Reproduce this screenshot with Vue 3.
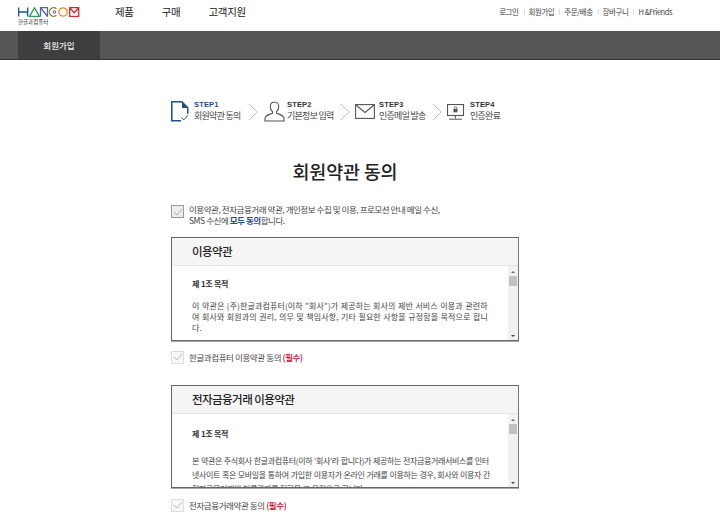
<script setup>
const steps = [
  { id: 'STEP1', label: '회원약관 동의', active: true, icon: 'doc' },
  { id: 'STEP2', label: '기본정보 입력', icon: 'user' },
  { id: 'STEP3', label: '인증메일 발송', icon: 'mail' },
  { id: 'STEP4', label: '인증완료', icon: 'monitor' },
]
const topLinks = ['로그인', '회원가입', '주문/배송', '장바구니', 'H &Friends']
</script>

<template>
  <div class="page">
    <header class="top">
      <div class="logo">
        <svg class="logo-mark" width="62" height="10" viewBox="0 0 62 10" fill="none" stroke-width="1.3">
          <path d="M.7 .5v9M9.700 .5v9M.7 5h9" stroke="#1b4f9c" />
          <path d="M11.500 9.300 16.500 .8 21.500 9.300Z" stroke="#2f9e4f" />
          <path d="M22.500 9.500V.6h7v8.900" stroke="#2a78c4" />
          <path d="M22.500 .6l7 8.900" stroke="#7b3fa0" />
          <path d="M38.500 1.700a4.300 4.300 0 1 0 0 6.600" stroke="#6f8f2a" />
          <circle cx="36.500" cy="5" r="1.300" stroke="#7b3fa0" stroke-width="1" />
          <circle cx="45" cy="5" r="4.200" stroke="#e8891a" />
          <path d="M51.700 9.300V.7h9v8.600ZM51.700 .7l4.500 5 4.500-5" stroke="#d8262c" />
        </svg>
        <span class="logo-sub">한글과컴퓨터</span>
      </div>
      <nav class="main-nav">
        <a>제품</a>
        <a>구매</a>
        <a>고객지원</a>
      </nav>
      <ul class="top-links">
        <li v-for="link in topLinks" :key="link">{{ link }}</li>
      </ul>
    </header>

    <div class="subbar">
      <div class="subtab">회원가입</div>
    </div>

    <main class="content">
      <ol class="steps">
        <template v-for="(s, i) in steps" :key="s.id">
          <li v-if="i > 0" class="chev">
            <svg width="10" height="18" viewBox="0 0 10 18" fill="none" stroke="#bdbdbd"><path d="M1 1l8 8-8 8" /></svg>
          </li>
          <li class="step" :class="[s.icon, { active: s.active }]">
            <svg v-if="s.icon === 'doc'" width="18" height="21" viewBox="0 0 18 21" fill="none" stroke="#1d4f91" stroke-width="1.5">
              <path d="M10 19.800H.8V.8h10l6 6v6" />
              <path d="M11 1v6h6Z" fill="#1d4f91" stroke="none" />
              <path d="M10.500 16.500l2.300 2.300 4-4.500" stroke-width="1" />
            </svg>
            <svg v-else-if="s.icon === 'user'" width="21" height="21" viewBox="0 0 21 21" fill="none" stroke="#555" stroke-width="1.1">
              <path d="M10.500 1c-2.700 0-4.200 2-4.200 4.700 0 2.200 1 4 2.200 5v1.600C6 13.300 1 14 1 17.600V20h19v-2.400c0-3.600-5-4.300-7.500-5.300v-1.600c1.200-1 2.200-2.800 2.200-5C14.700 3 13.200 1 10.500 1Z" />
            </svg>
            <svg v-else-if="s.icon === 'mail'" width="20" height="15" viewBox="0 0 20 15" fill="none" stroke="#555" stroke-width="1.1">
              <rect x=".6" y=".6" width="18.800" height="13.800" />
              <path d="M1 1l9 7.500L19 1" />
            </svg>
            <svg v-else width="19" height="16" viewBox="0 0 19 16" fill="none" stroke="#555">
              <rect x="1.500" y=".5" width="16" height="11" stroke-width="1.100" />
              <rect x="7.500" y="4.800" width="4" height="3.500" fill="#555" stroke="none" />
              <path d="M8.300 4.800V3.800a1.200 1.200 0 0 1 2.400 0v1" stroke-width=".8" />
              <path d="M9.500 11.500v3M3 15.200h13" />
            </svg>
            <div class="step-text">
              <strong>{{ s.id }}</strong>
              <span>{{ s.label }}</span>
            </div>
          </li>
        </template>
      </ol>

      <h1 class="title">회원약관 동의</h1>

      <div class="all-agree">
        <span class="check check-all"><svg width="10" height="8" viewBox="0 0 10 8" fill="none" stroke="#aaa"><path d="M1 4l3 3 5-6" /></svg></span>
        <p>이용약관, 전자금융거래 약관, 개인정보 수집 및 이용, 프로모션 안내 메일 수신,<br />SMS 수신에 <b>모두 동의</b>합니다.</p>
      </div>

      <section class="terms">
        <h2>이용약관</h2>
        <div class="scrollbox">
          <div class="scroll-text">
            <h3>제 1조 목적</h3>
            <p>이 약관은 (주)한글과컴퓨터(이하 "회사")가 제공하는 회사의 제반 서비스 이용과 관련하여 회사와 회원과의 권리, 의무 및 책임사항, 기타 필요한 사항을 규정함을 목적으로 합니다.</p>
          </div>
          <div class="bar">
            <span class="arrow up"></span>
            <span class="thumb"></span>
            <span class="arrow down"></span>
          </div>
        </div>
      </section>
      <label class="agree">
        <span class="check"><svg width="10" height="8" viewBox="0 0 10 8" fill="none" stroke="#bbb"><path d="M1 4l3 3 5-6" /></svg></span>
        <span>한글과컴퓨터 이용약관 동의 <em>(필수)</em></span>
      </label>

      <section class="terms second">
        <h2>전자금융거래 이용약관</h2>
        <div class="scrollbox">
          <div class="scroll-text wide">
            <h3>제 1조 목적</h3>
            <p>본 약관은 주식회사 한글과컴퓨터(이하 '회사'라 합니다)가 제공하는 전자금융거래서비스를 인터넷사이트 혹은 모바일을 통하여 가입한 이용자가 온라인 거래를 이용하는 경우, 회사와 이용자 간 전자금융거래의 법률관계를 정함을 그 목적으로 합니다.</p>
          </div>
          <div class="bar">
            <span class="arrow up"></span>
            <span class="thumb"></span>
            <span class="arrow down"></span>
          </div>
        </div>
      </section>
      <label class="agree">
        <span class="check"><svg width="10" height="8" viewBox="0 0 10 8" fill="none" stroke="#bbb"><path d="M1 4l3 3 5-6" /></svg></span>
        <span>전자금융거래약관 동의 <em>(필수)</em></span>
      </label>
    </main>
  </div>
</template>

<style>
html, body { margin: 0; background: #fff; overflow: hidden; }
</style>

<style scoped>
.page {
  width: 720px;
  height: 529px;
  overflow: hidden;
  font-family: "Noto Sans CJK KR", "Noto Sans", sans-serif;
  color: #333;
}
.top {
  height: 31px;
  display: flex;
  align-items: flex-start;
  padding-left: 18px;
  box-sizing: border-box;
}
.logo { width: 97px; padding-top: 7px; display: flex; flex-direction: column; }
.logo-mark { display: block; }
.logo-sub { font-size: 5.500px; line-height: 7px; margin-top: 2px; color: #333; }
.main-nav { display: flex; gap: 28px; padding-top: 4px; font-size: 10.500px; line-height: 16px; color: #222; letter-spacing: -.3px; }
.top-links {
  list-style: none;
  margin: 0 48px 0 auto;
  padding: 7px 0 0;
  display: flex;
  font-size: 7.500px;
  line-height: 10px;
  letter-spacing: -.45px;
  color: #444;
}
.top-links li + li { margin-left: 5px; padding-left: 5px; position: relative; }
.top-links li + li::before { content: ""; position: absolute; left: 0; top: 2px; height: 6px; width: 1px; background: #ddd; }
.subbar { background: #565657; border-bottom: 1px solid #333; height: 28px; padding-left: 18px; }
.subtab { width: 82px; height: 28px; background: #3e3e3e; color: #eee; font-size: 8.500px; font-weight: 500; line-height: 29px; text-align: center; }
.content { width: 348px; margin-left: 171px; }
.steps { list-style: none; margin: 0; padding: 34px 0 0; display: flex; align-items: center; height: 35px; }
.step { display: flex; align-items: center; gap: 5px; }
.step.user { gap: 2px; }
.step.mail { gap: 4px; }
.step-text { display: flex; flex-direction: column; width: 47px; margin-bottom: 2px; }
.step-text strong { font-family: "Liberation Sans", sans-serif; font-size: 7.500px; line-height: 10px; font-weight: 700; color: #333; letter-spacing: .15px; }
.step-text span { font-size: 9px; line-height: 11px; letter-spacing: -.72px; color: #444; white-space: nowrap; }
.step.active strong { color: #1d4f91; }
.chev { display: flex; margin: 0 6px 0 7px; }
.chev:nth-child(4) { margin: 0 5px 0 6px; }
.chev:nth-child(6) { margin: 0 4px 0 6px; }
.title { margin: 29px 0 0; text-align: center; font-size: 18.500px; line-height: 26px; font-weight: 500; color: #222; letter-spacing: -.2px; }
.all-agree { display: flex; gap: 5px; margin-top: 20px; }
.all-agree p { margin: 0; font-size: 8.500px; line-height: 11px; letter-spacing: -.45px; color: #444; }
.all-agree b { color: #1d4f91; font-weight: 700; }
.check { width: 11px; height: 11px; flex: none; border: 1px solid #ddd; background: #f7f7f7; display: flex; align-items: center; justify-content: center; }
.check-all { border-color: #999; background: #eee; margin-top: 1px; }
.terms { margin-top: 11px; height: 104px; box-sizing: border-box; border: 1px solid #666; border-right-color: #777; box-shadow: 0 1px 0 #aaa; display: flex; flex-direction: column; }
.terms.second { margin-top: 21px; height: 103px; }
.terms h2 { margin: 0; height: 28px; flex: none; background: #f5f5f5; border-bottom: 1px solid #e6e6e6; box-sizing: border-box; padding-left: 20px; font-size: 11.500px; line-height: 27px; font-weight: 500; color: #222; letter-spacing: -.55px; }
.scrollbox { flex: 1; min-height: 0; display: flex; overflow: hidden; }
.scroll-text { flex: 1; padding: 12px 18px 0 20px; font-size: 8px; line-height: 11px; letter-spacing: .13px; word-spacing: .5px; color: #444; overflow: hidden; }
.scroll-text h3 { margin: 0 0 11px; font: inherit; font-weight: 700; color: #333; letter-spacing: -.4px; }
.scroll-text p { margin: 0; word-break: break-all; }
.scroll-text.wide { line-height: 14px; padding: 13px 17px 0 20px; letter-spacing: -.36px; }
.scroll-text.wide h3 { margin: 0 0 13px; }
.bar { width: 10px; flex: none; background: #f1f1f1; position: relative; }
.thumb { position: absolute; top: 10px; left: 1px; width: 8px; height: 10px; background: #c1c1c1; }
.arrow { position: absolute; left: 3px; width: 0; height: 0; border-left: 2px solid transparent; border-right: 2px solid transparent; }
.arrow.up { top: 5px; border-bottom: 2px solid #666; }
.arrow.down { bottom: 3px; border-top: 2px solid #444; }
.agree { display: flex; align-items: center; gap: 5px; height: 14px; margin-top: 9px; font-size: 8.500px; letter-spacing: -.4px; color: #444; }
.second + .agree { margin-top: 10px; }
.agree em { font-style: normal; color: #d0021b; font-weight: 500; }
</style>
